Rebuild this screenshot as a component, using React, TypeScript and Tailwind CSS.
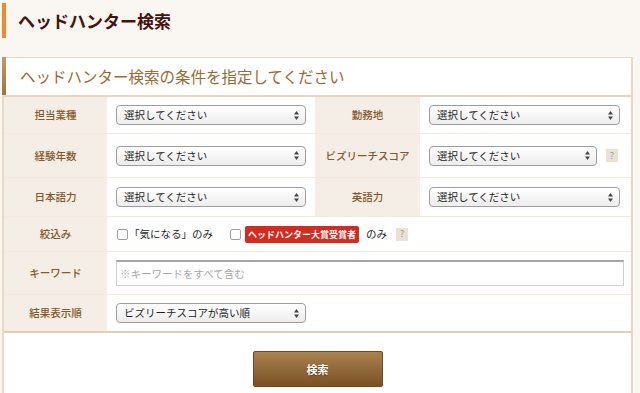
import React from 'react';

const Arrows: React.FC = () => (
  <svg width="5" height="9" viewBox="0 0 5 9" className="shrink-0">
    <path d="M2.5 0 L5 3.5 L0 3.5Z" fill="#444" />
    <path d="M0 5.5 L5 5.5 L2.5 9Z" fill="#444" />
  </svg>
);

const Select: React.FC<{ className: string; text?: string }> = ({ className, text = '選択してください' }) => (
  <div
    className={`${className} h-[20px] flex items-center justify-between rounded-[4px] border border-[#9d9d9d] bg-gradient-to-b from-white to-[#ededed] pl-[7px] pr-[6px] text-[10.5px] text-[#1e1e1e] shadow-[inset_0_1px_0_#fff]`}
  >
    <span>{text}</span>
    <Arrows />
  </div>
);

const Help: React.FC = () => (
  <span className="inline-flex h-[13px] w-[12px] items-center justify-center bg-[#ebe1d4] text-[9px] text-[#9a9a9a]">?</span>
);

const Check: React.FC = () => (
  <span className="inline-block h-[11px] w-[11px] rounded-[2px] border border-[#a0a0a0] bg-white" />
);

const Label: React.FC<{ children: React.ReactNode; className?: string }> = ({ children, className = 'w-[103px]' }) => (
  <div className={`${className} shrink-0 self-stretch flex items-center justify-center bg-[#f5eee6] text-[10.5px] font-medium text-[#87582a]`}>
    {children}
  </div>
);

const App: React.FC = () => {
  return (
    <div className="h-[393px] w-[640px] overflow-hidden bg-[#faf7f2] font-['Noto_Sans_CJK_JP','Noto_Sans',sans-serif]">
      {/* Page title */}
      <div className="pt-[3px] pl-[2px]">
        <div className="flex h-[35px] items-center border-l-4 border-[#f08a2c] pl-[12px]">
          <h1 className="text-[17px] font-bold text-[#46120f]">ヘッドハンター検索</h1>
        </div>
      </div>

      {/* Search panel */}
      <div className="mt-[19px] ml-[2px] w-[631px] border-t border-r-2 border-l-2 border-[#e8d9c7] bg-white">
        <div className="relative flex h-[39px] items-center border-b-2 border-[#e6d4bf] pl-[16px]">
          <div className="absolute -left-[2px] top-[-1px] bottom-0 w-[4px] bg-gradient-to-b from-[#c19a6b] to-[#9f7445]" />
          <h2 className="text-[15.5px] text-[#9a6a35]">ヘッドハンター検索の条件を指定してください</h2>
        </div>

        {/* Row 1 */}
        <div className="flex h-[37px] items-center border-b border-[#f4e9dd]">
          <Label>担当業種</Label>
          <div className="flex w-[208px] items-center pl-[9px]">
            <Select className="w-[190px]" />
          </div>
          <Label className="w-[105px]">勤務地</Label>
          <div className="flex flex-1 items-center pl-[9px]">
            <Select className="w-[191px]" />
          </div>
        </div>

        {/* Row 2 */}
        <div className="flex h-[44px] items-center border-b border-[#f4e9dd]">
          <Label>経験年数</Label>
          <div className="flex w-[208px] items-center pl-[9px]">
            <Select className="w-[190px]" />
          </div>
          <Label className="w-[105px]">ビズリーチスコア</Label>
          <div className="flex flex-1 items-center gap-[9px] pl-[9px]">
            <Select className="w-[168px]" />
            <Help />
          </div>
        </div>

        {/* Row 3 */}
        <div className="flex h-[39px] items-center border-b border-[#f4e9dd]">
          <Label>日本語力</Label>
          <div className="flex w-[208px] items-center pl-[9px]">
            <Select className="w-[190px]" />
          </div>
          <Label className="w-[105px]">英語力</Label>
          <div className="flex flex-1 items-center pl-[9px]">
            <Select className="w-[191px]" />
          </div>
        </div>

        {/* Row 4 */}
        <div className="flex h-[35px] items-center border-b border-[#f4e9dd]">
          <Label>絞込み</Label>
          <div className="flex items-center pl-[10px] text-[10.5px] text-[#1e1e1e]">
            <Check />
            <span className="ml-[1px]">「気になる」のみ</span>
            <span className="ml-[17px] flex"><Check /></span>
            <span className="ml-[4px] rounded-[2px] bg-[#d52a20] px-[3px] py-[1px] text-[9px] font-bold leading-[15px] text-white">ヘッドハンター大賞受賞者</span>
            <span className="ml-[7px]">のみ</span>
            <span className="ml-[9px] flex"><Help /></span>
          </div>
        </div>

        {/* Row 5 */}
        <div className="flex h-[43px] items-center border-b border-[#f4e9dd]">
          <Label>キーワード</Label>
          <div className="flex flex-1 items-center pl-[9px] pr-[7px]">
            <div className="flex h-[26px] w-full items-center border border-t-2 border-[#cfcfcf] border-t-[#a5a5a5] pl-[3px] text-[10.5px] text-[#a8a8a8]">
              ※キーワードをすべて含む
            </div>
          </div>
        </div>

        {/* Row 6 */}
        <div className="flex h-[38px] items-center border-b-2 border-[#e3cfb8]">
          <Label>結果表示順</Label>
          <div className="flex items-center pl-[9px]">
            <Select className="w-[190px]" text="ビズリーチスコアが高い順" />
          </div>
        </div>

        {/* Submit */}
        <div className="flex justify-center pt-[18px] pb-[10px]">
          <button className="flex h-[36px] w-[130px] items-center justify-center rounded-[2px] border border-[#6e4a22] bg-gradient-to-b from-[#a9824f] to-[#7b5124] text-[11px] font-bold text-white [text-shadow:0_1px_1px_rgba(0,0,0,0.4)]">
            検索
          </button>
        </div>
      </div>
    </div>
  );
};

export default App;
